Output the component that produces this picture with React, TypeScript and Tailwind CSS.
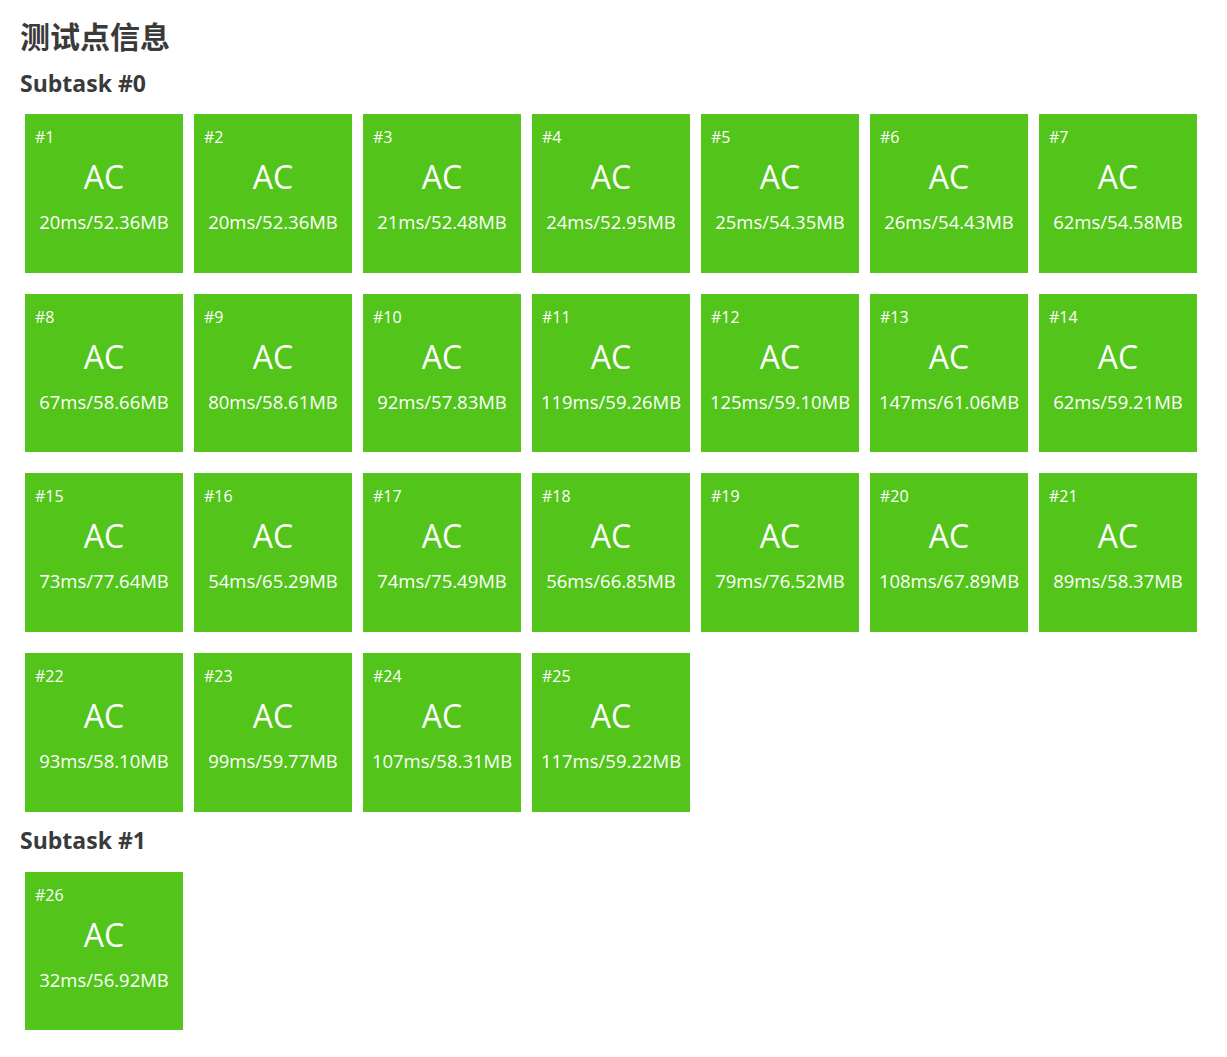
const subtasks = [
  {
    name: "Subtask #0",
    cases: [
      ["20ms", "52.36MB"],
      ["20ms", "52.36MB"],
      ["21ms", "52.48MB"],
      ["24ms", "52.95MB"],
      ["25ms", "54.35MB"],
      ["26ms", "54.43MB"],
      ["62ms", "54.58MB"],
      ["67ms", "58.66MB"],
      ["80ms", "58.61MB"],
      ["92ms", "57.83MB"],
      ["119ms", "59.26MB"],
      ["125ms", "59.10MB"],
      ["147ms", "61.06MB"],
      ["62ms", "59.21MB"],
      ["73ms", "77.64MB"],
      ["54ms", "65.29MB"],
      ["74ms", "75.49MB"],
      ["56ms", "66.85MB"],
      ["79ms", "76.52MB"],
      ["108ms", "67.89MB"],
      ["89ms", "58.37MB"],
      ["93ms", "58.10MB"],
      ["99ms", "59.77MB"],
      ["107ms", "58.31MB"],
      ["117ms", "59.22MB"],
    ],
  },
  {
    name: "Subtask #1",
    cases: [["32ms", "56.92MB"]],
  },
];

const CaseBox = ({ id, time, mem }: { id: number; time: string; mem: string }) => (
  <div className="w-[158px] h-[158.67px] bg-[#52c41a] text-white flex flex-col pt-[15px] px-[10px]">
    <div className="text-[16px] leading-none">#{id}</div>
    <div className="mt-[16px] text-[32px] leading-none text-center">AC</div>
    <div className="mt-[20px] text-[18.5px] leading-none text-center whitespace-nowrap -mx-[10px]">
      {time}/{mem}
    </div>
  </div>
);

const App = () => {
  let counter = 0;
  return (
    <div className="bg-white min-h-screen px-[20px] pt-[21px] font-['Open_Sans',sans-serif]">
      <h1 className="text-[30px] leading-[29px] font-bold text-[#3a3a3a] font-['Noto_Sans_CJK_SC',sans-serif]">
        测试点信息
      </h1>
      {subtasks.map((st, si) => (
        <div key={st.name} className={si === 0 ? "mt-[22px]" : "mt-[17px]"}>
          <h2 className="text-[23px] leading-none font-bold text-[#3a3a3a]">{st.name}</h2>
          <div
            className={`${si === 0 ? "mt-[19px]" : "mt-[20px]"} ml-[5px] flex flex-wrap gap-x-[11px] gap-y-[21px] w-[1172px]`}
          >
            {st.cases.map(([time, mem]) => {
              counter += 1;
              return <CaseBox key={counter} id={counter} time={time} mem={mem} />;
            })}
          </div>
        </div>
      ))}
    </div>
  );
};

export default App;
